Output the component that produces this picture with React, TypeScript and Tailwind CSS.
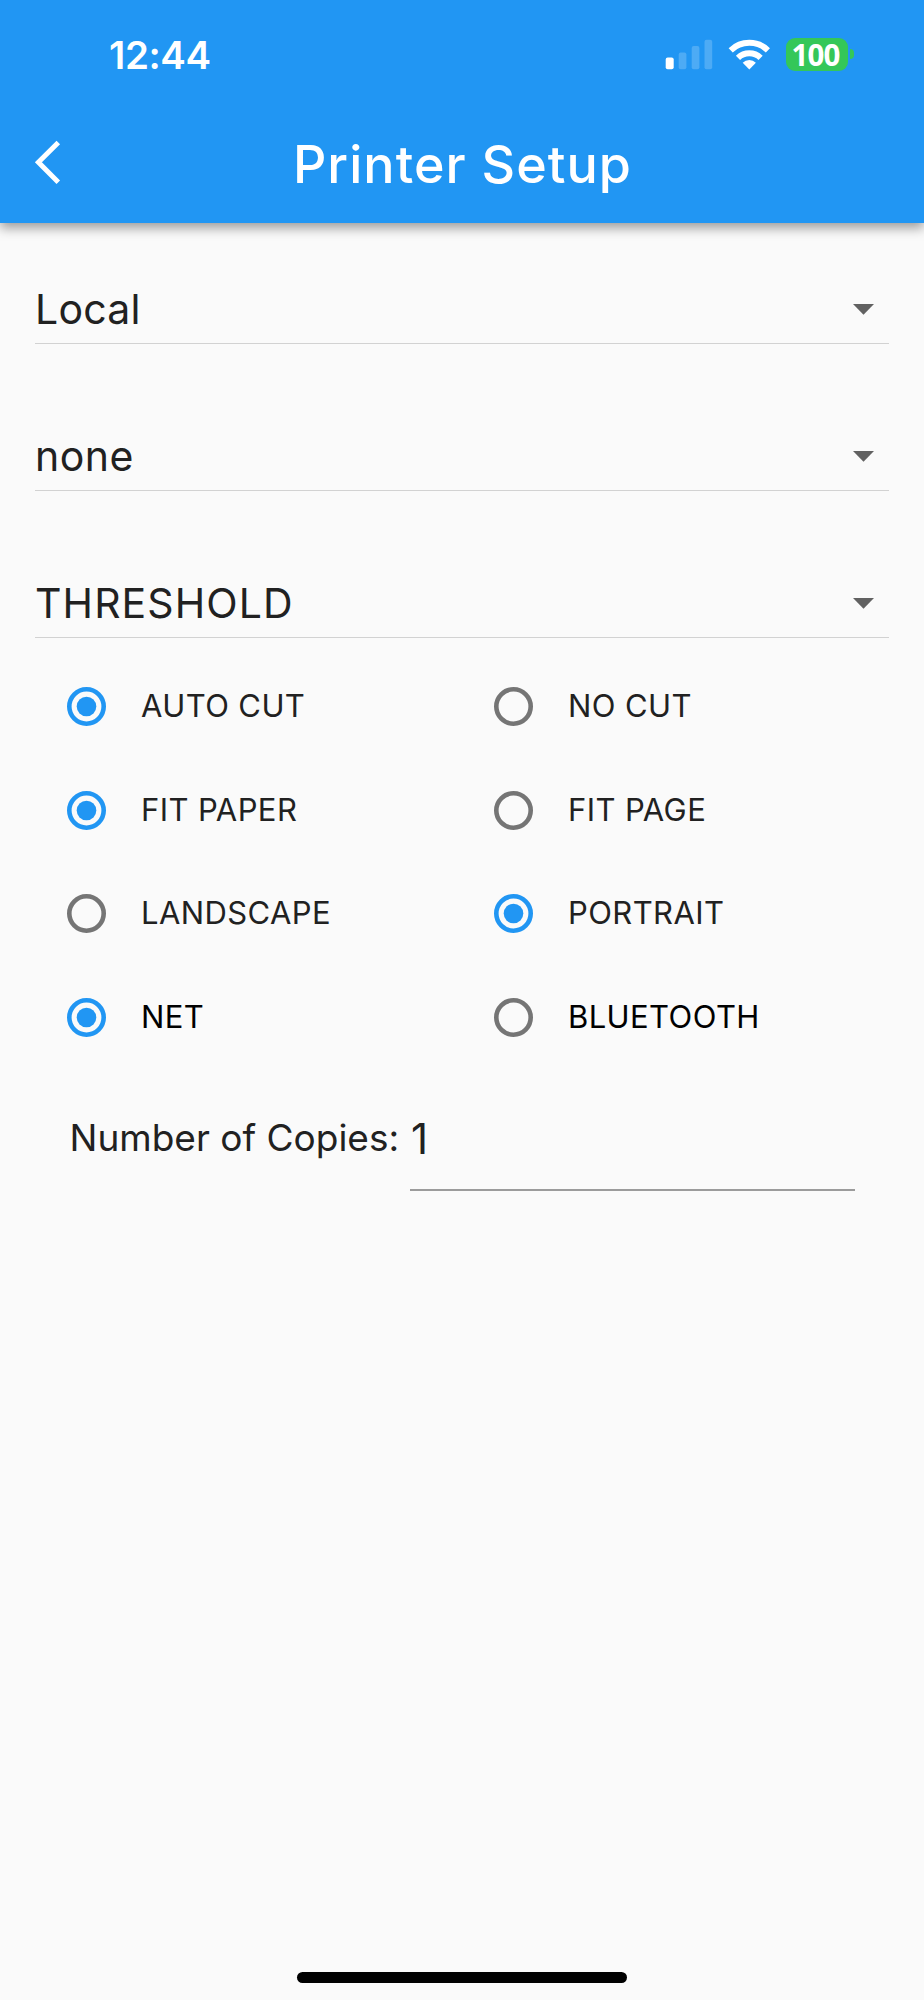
import { useState } from 'react';
import { clsx } from 'clsx';

interface RadioOption {
  label: string;
  value: string;
}

interface RadioGroup {
  name: string;
  options: RadioOption[];
  labelClass: string;
}

const dropdowns = [
  { value: 'Local', className: 'tracking-[0.2px]' },
  { value: 'none', className: 'tracking-[0.5px]' },
  { value: 'THRESHOLD', className: 'tracking-[1.1px]' },
];

const groups: RadioGroup[] = [
  {
    name: 'cut',
    options: [
      { label: 'AUTO CUT', value: 'auto' },
      { label: 'NO CUT', value: 'none' },
    ],
    labelClass: 'text-[#212121]',
  },
  {
    name: 'fit',
    options: [
      { label: 'FIT PAPER', value: 'paper' },
      { label: 'FIT PAGE', value: 'page' },
    ],
    labelClass: 'text-[#212121]',
  },
  {
    name: 'orientation',
    options: [
      { label: 'LANDSCAPE', value: 'landscape' },
      { label: 'PORTRAIT', value: 'portrait' },
    ],
    labelClass: 'text-[#212121]',
  },
  {
    name: 'connection',
    options: [
      { label: 'NET', value: 'net' },
      { label: 'BLUETOOTH', value: 'bluetooth' },
    ],
    labelClass: 'text-black',
  },
];

const SignalIcon = () => (
  <svg width="48" height="32" viewBox="0 0 48 32" fill="white">
    <rect x="0.7" y="19.5" width="8" height="11.7" rx="2" />
    <rect x="13.7" y="14.5" width="7.7" height="16.7" rx="2" opacity="0.2" />
    <rect x="26.7" y="8" width="7.7" height="23.2" rx="2" opacity="0.2" />
    <rect x="39.5" y="1.7" width="7.7" height="29.5" rx="2" opacity="0.2" />
  </svg>
);

const WifiIcon = () => (
  <svg width="44" height="32" viewBox="0 0 44 32" fill="none" stroke="white" strokeWidth="6">
    <path d="M3.7 12.3 A27 27 0 0 1 40.9 12.3" />
    <path d="M11 19.9 A16.3 16.3 0 0 1 33.6 19.9" />
    <path d="M22.3 31.4 L15.7 24.8 A9.3 9.3 0 0 1 28.9 24.8 Z" fill="white" stroke="none" />
  </svg>
);

const StatusBar = () => (
  <div className="flex h-[108px] items-center justify-between pl-[109px] pr-[70px]">
    <span className="pt-[2px] text-[38.5px] leading-none font-semibold tracking-[-0.4px]">12:44</span>
    <div className="flex items-center">
      <SignalIcon />
      <div className="ml-[14px]">
        <WifiIcon />
      </div>
      <div className="ml-[15px] flex h-[33px] w-[62px] items-center justify-center rounded-[9px] bg-[#34c759] pt-[1px] pr-[3px] font-['Open_Sans',sans-serif] text-[29.5px] leading-none font-bold tracking-[-0.8px]">
        100
      </div>
      <div className="ml-[2px] h-[10px] w-[4px] rounded-r-full bg-[#34c759]" />
    </div>
  </div>
);

const AppBar = () => (
  <header className="h-[222.5px] bg-[#2196f3] text-white shadow-[0_5px_11px_rgba(0,0,0,0.38)]">
    <StatusBar />
    <div className="grid h-[114px] grid-cols-[100px_1fr_100px] items-center">
      <button className="pb-[6px] pl-[34px]" aria-label="Back">
        <svg width="27" height="44" viewBox="0 0 27 44" fill="none" stroke="white" strokeWidth="5">
          <path d="M24.3 2.4 L4.4 22.3 L24.3 42.2" />
        </svg>
      </button>
      <h1 className="pl-[1px] text-center text-[52px] font-medium tracking-[1.05px] whitespace-nowrap">Printer Setup</h1>
    </div>
  </header>
);

const Dropdown = ({ value, className }: { value: string; className: string }) => (
  <div className="flex h-[69px] items-center justify-between border-b border-[#d2d2d2] pt-[2px] pr-[15px]">
    <span className={clsx('text-[41px]', className)}>{value}</span>
    <svg width="21" height="11" viewBox="0 0 21 11" fill="#616161">
      <path d="M0 0 H21 L10.5 10.7 Z" />
    </svg>
  </div>
);

interface RadioProps {
  label: string;
  checked: boolean;
  labelClass: string;
  onSelect: () => void;
}

const Radio = ({ label, checked, labelClass, onSelect }: RadioProps) => (
  <button role="radio" aria-checked={checked} onClick={onSelect} className="flex h-[103.7px] items-center pl-[32px]">
    <svg
      width="39"
      height="39"
      viewBox="0 0 39 39"
      className={clsx(checked ? 'text-[#2196f3]' : 'text-[#757575]')}
    >
      <circle cx="19.5" cy="19.5" r="17.2" fill="none" stroke="currentColor" strokeWidth="4.6" />
      {checked && <circle cx="19.5" cy="19.5" r="9.8" fill="currentColor" />}
    </svg>
    <span className={clsx('ml-[35px] text-[31px] tracking-[0.4px]', labelClass)}>{label}</span>
  </button>
);

const App = () => {
  const [selected, setSelected] = useState<Record<string, string>>({
    cut: 'auto',
    fit: 'paper',
    orientation: 'portrait',
    connection: 'net',
  });
  const [copies, setCopies] = useState('1');

  return (
    <div className="flex h-[2000px] w-[924px] flex-col bg-[#fafafa] font-['Inter',sans-serif] text-[#212121]">
      <AppBar />

      <main className="flex-1 px-[35px] pt-[52px]">
        <div className="flex flex-col gap-[78px]">
          {dropdowns.map((item) => (
            <Dropdown key={item.value} value={item.value} className={item.className} />
          ))}
        </div>

        <div className="mt-[17px]">
          {groups.map((group) => (
            <div key={group.name} role="radiogroup" className="grid grid-cols-2">
              {group.options.map((option) => (
                <Radio
                  key={option.value}
                  label={option.label}
                  labelClass={group.labelClass}
                  checked={selected[group.name] === option.value}
                  onSelect={() => setSelected({ ...selected, [group.name]: option.value })}
                />
              ))}
            </div>
          ))}
        </div>

        <div className="mt-[17px] flex items-center pr-[34px] pl-[34px]">
          <label htmlFor="copies" className="w-[341px] pb-[2px] pl-[0.5px] text-[37px] whitespace-nowrap">
            Number of Copies:
          </label>
          <input
            id="copies"
            value={copies}
            onChange={(e) => setCopies(e.target.value)}
            className="h-[105px] min-w-0 flex-1 border-b-2 border-[#9b9b9b] bg-transparent pt-[2px] pl-[1px] text-[42px] outline-none"
          />
        </div>
      </main>

      <div className="mx-auto mb-[17.5px] h-[11px] w-[330px] rounded-full bg-black" />
    </div>
  );
};

export default App;
